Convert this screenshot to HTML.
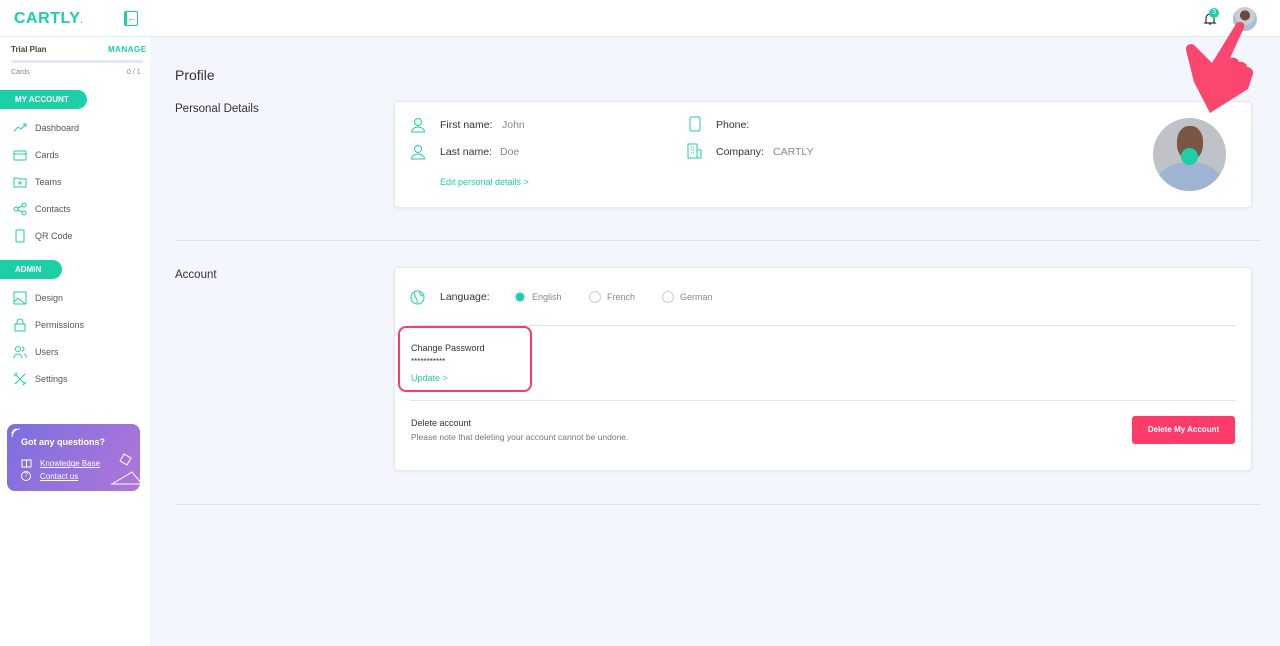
<!DOCTYPE html>
<html><head><meta charset="utf-8"><style>
*{box-sizing:border-box;margin:0;padding:0}
body{width:1280px;height:646px;overflow:hidden;font-family:"Liberation Sans",sans-serif;background:#f3f6fc;position:relative;color:#333}
.abs{position:absolute}
.hdr{left:0;top:0;width:1280px;height:37px;background:#fff;border-bottom:1px solid #e3e8f0}
.side{left:0;top:37px;width:150px;height:609px;background:#fff}
.t{color:#1dcfa6}
.nav{position:absolute;left:13px;font-size:9px;color:#555;display:flex;align-items:center}
.nav svg{width:14px;height:14px;margin-right:8px}
.pill{position:absolute;left:0;height:19px;background:#1dcfa6;border-radius:0 10px 10px 0;color:#fff;font-size:8px;font-weight:bold;padding-left:15px;line-height:19px}
.card{background:#fff;border:1px solid #e3e8f0;border-radius:4px;box-shadow:0 1px 3px rgba(0,0,0,.05)}
.lbl{font-size:10.5px;color:#333}
.val{font-size:10.5px;color:#888}
.hr{height:1px;background:#dfe4ec}
.radio{width:12px;height:12px;border:1px solid #ccd;border-radius:50%;display:inline-block}
</style></head><body>
<div class="abs hdr">
 <div class="abs t" style="left:14px;top:10px;font-size:16px;font-weight:bold;letter-spacing:0.5px">CARTLY<span style="font-size:8px">.</span></div>
 <div class="abs" style="left:124px;top:11px;width:14px;height:15px;border:1px solid #1dcfa6;border-left:3px solid #1dcfa6;border-radius:2px;font-size:9px;color:#888;text-align:center;line-height:12px">&larr;</div>
 <svg class="abs" style="left:1202px;top:11px" width="16" height="16" viewBox="0 0 16 16"><path d="M4 11V7a4 4 0 018 0v4l1 1H3z M7 13h2" stroke="#333" fill="none" stroke-width="1.2"/></svg>
 <div class="abs" style="left:1209px;top:8px;width:10px;height:10px;border-radius:50%;background:#1dcfa6;color:#fff;font-size:7px;text-align:center;line-height:10px">3</div>
 <div class="abs" style="left:1233px;top:7px;width:24px;height:24px;border-radius:50%;background:radial-gradient(circle at 50% 35%,#6b4a3a 0 25%,#c9ccd2 26% 50%,#a7bfd8 51%)"></div>
</div>
<div class="abs side">
 <div class="abs" style="left:11px;top:8px;font-size:8px;font-weight:bold;color:#444">Trial Plan</div>
 <div class="abs t" style="left:108px;top:8px;font-size:8px;font-weight:bold;letter-spacing:.5px">MANAGE</div>
 <div class="abs" style="left:11px;top:23px;width:132px;height:3px;background:#e3e8f0;border-radius:2px"></div>
 <div class="abs" style="left:11px;top:32px;font-size:7px;color:#888">Cards</div>
 <div class="abs" style="left:127px;top:32px;font-size:7px;color:#888">0 / 1</div>
 <div class="pill" style="top:53px;width:87px">MY ACCOUNT</div>
 <div class="nav" style="top:84px"><svg viewBox="0 0 14 14"><path d="M1 10l4-4 3 2 5-5M10 3h3v3" stroke="#1dcfa6" fill="none"/></svg>Dashboard</div>
 <div class="nav" style="top:111px"><svg viewBox="0 0 14 14"><rect x="1" y="3" width="12" height="9" rx="1" stroke="#1dcfa6" fill="none"/><path d="M1 6h12" stroke="#1dcfa6"/></svg>Cards</div>
 <div class="nav" style="top:138px"><svg viewBox="0 0 14 14"><path d="M1 3h4l1 1h7v8H1z M7 6v4M5 8h4" stroke="#1dcfa6" fill="none"/></svg>Teams</div>
 <div class="nav" style="top:165px"><svg viewBox="0 0 14 14"><circle cx="3" cy="7" r="2" stroke="#1dcfa6" fill="none"/><circle cx="11" cy="3" r="2" stroke="#1dcfa6" fill="none"/><circle cx="11" cy="11" r="2" stroke="#1dcfa6" fill="none"/><path d="M5 6l4-2M5 8l4 2" stroke="#1dcfa6"/></svg>Contacts</div>
 <div class="nav" style="top:192px"><svg viewBox="0 0 14 14"><rect x="3" y="1" width="8" height="12" rx="1" stroke="#1dcfa6" fill="none"/></svg>QR Code</div>
 <div class="pill" style="top:223px;width:62px">ADMIN</div>
 <div class="nav" style="top:254px"><svg viewBox="0 0 14 14"><rect x="1" y="1" width="12" height="12" stroke="#1dcfa6" fill="none"/><path d="M1 11l4-4 7 6" stroke="#1dcfa6" fill="none"/></svg>Design</div>
 <div class="nav" style="top:281px"><svg viewBox="0 0 14 14"><rect x="2" y="6" width="10" height="7" stroke="#1dcfa6" fill="none"/><path d="M4 6V4a3 3 0 016 0v2" stroke="#1dcfa6" fill="none"/></svg>Permissions</div>
 <div class="nav" style="top:308px"><svg viewBox="0 0 14 14"><circle cx="5" cy="4" r="2.5" stroke="#1dcfa6" fill="none"/><path d="M1 13a4 4 0 018 0M9 2a2 2 0 010 4M11 9a3 3 0 012 4" stroke="#1dcfa6" fill="none"/></svg>Users</div>
 <div class="nav" style="top:335px"><svg viewBox="0 0 14 14"><path d="M2 2l10 10M12 2L2 12M1 4l3-3M10 13l3-3" stroke="#1dcfa6" fill="none"/></svg>Settings</div>
 <div class="abs" style="left:7px;top:387px;width:133px;height:67px;border-radius:8px;background:linear-gradient(120deg,#7b6fe0,#b076d8);color:#fff;overflow:hidden">
  <svg class="abs" style="left:4px;top:4px" width="10" height="10"><path d="M1 9a8 8 0 018-8M1 6a5 5 0 015-5" stroke="#fff" fill="none"/></svg>
  <div class="abs" style="left:14px;top:13px;font-size:9px;font-weight:bold">Got any questions?</div>
  <svg class="abs" style="left:14px;top:35px" width="11" height="9"><path d="M1 1h4l0.5 1L6 1h4v7H6l-0.5 0.5L5 8H1z M5.5 2v6" stroke="#fff" fill="none"/></svg>
  <div class="abs" style="left:33px;top:35px;font-size:8px;text-decoration:underline">Knowledge Base</div>
  <div class="abs" style="left:14px;top:47px;width:10px;height:10px;border:1px solid #fff;border-radius:50%;font-size:7px;text-align:center;line-height:8px">?</div>
  <div class="abs" style="left:33px;top:48px;font-size:8px;text-decoration:underline">Contact us</div>
  <div class="abs" style="left:114px;top:31px;width:9px;height:9px;border:1px solid #fff;transform:rotate(30deg)"></div>
  <svg class="abs" style="left:103px;top:44px" width="32" height="24"><path d="M2 16L22 4l10 12z" stroke="#fff" fill="none"/></svg>
 </div>
</div>
<div class="abs" style="left:175px;top:67px;font-size:14px;color:#333">Profile</div>
<div class="abs" style="left:175px;top:103px;font-size:11.5px;color:#333">Personal Details</div>
<div class="abs card" style="left:394px;top:101px;width:858px;height:107px">
 <svg class="abs" style="left:15px;top:15px" width="16" height="16" viewBox="0 0 16 16"><circle cx="8" cy="5" r="3.5" stroke="#1dcfa6" fill="none"/><path d="M1.5 15a6.5 5 0 0113 0z" stroke="#1dcfa6" fill="none"/></svg>
 <div class="abs lbl" style="left:45px;top:17px">First name:</div><div class="abs val" style="left:107px;top:17px">John</div>
 <svg class="abs" style="left:15px;top:42px" width="16" height="16" viewBox="0 0 16 16"><circle cx="8" cy="5" r="3.5" stroke="#1dcfa6" fill="none"/><path d="M1.5 15a6.5 5 0 0113 0z" stroke="#1dcfa6" fill="none"/></svg>
 <div class="abs lbl" style="left:45px;top:44px">Last name:</div><div class="abs val" style="left:105px;top:44px">Doe</div>
 <div class="abs t" style="left:45px;top:75px;font-size:9px">Edit personal details &gt;</div>
 <svg class="abs" style="left:293px;top:14px" width="14" height="16"><rect x="2" y="1" width="10" height="14" rx="1.5" stroke="#1dcfa6" fill="none"/></svg>
 <div class="abs lbl" style="left:321px;top:17px">Phone:</div>
 <svg class="abs" style="left:292px;top:41px" width="16" height="16"><rect x="1" y="1" width="9" height="14" stroke="#1dcfa6" fill="none"/><rect x="10" y="7" width="4" height="8" stroke="#1dcfa6" fill="none"/><path d="M4 4h1M6 4h1M4 7h1M6 7h1M4 10h1M6 10h1" stroke="#1dcfa6"/></svg>
 <div class="abs lbl" style="left:321px;top:44px">Company:</div><div class="abs val" style="left:378px;top:44px">CARTLY</div>
 <div class="abs" style="left:758px;top:16px;width:73px;height:73px;border-radius:50%;overflow:hidden;background:#bfc2c6">
  <div class="abs" style="left:-5px;top:44px;width:83px;height:45px;border-radius:40px 40px 0 0;background:#9db4d2"></div>
  <div class="abs" style="left:24px;top:8px;width:26px;height:34px;border-radius:45%;background:#7a5644"></div>
 </div>
 <div class="abs" style="left:786px;top:46px;width:17px;height:17px;border-radius:50%;background:#1dcfa6"></div>
</div>
<div class="abs hr" style="left:175px;top:240px;width:1085px"></div>
<div class="abs" style="left:175px;top:269px;font-size:11.5px;color:#333">Account</div>
<div class="abs card" style="left:394px;top:267px;width:858px;height:204px">
 <svg class="abs" style="left:15px;top:22px" width="15" height="15"><circle cx="7.5" cy="7.5" r="6.5" stroke="#1dcfa6" fill="none"/><path d="M4 3c2 2 0 4 2 5s1 4 1 5M10 2c-1 2 1 4 3 4" stroke="#1dcfa6" fill="none"/></svg>
 <div class="abs lbl" style="left:45px;top:23px">Language:</div>
 <div class="abs radio" style="left:119px;top:23px;border-color:#dde;background:radial-gradient(circle,#1dcfa6 0 4px,#fff 4.5px)"></div><div class="abs val" style="left:137px;top:24px;font-size:9px">English</div>
 <div class="abs radio" style="left:194px;top:23px"></div><div class="abs val" style="left:212px;top:24px;font-size:9px">French</div>
 <div class="abs radio" style="left:267px;top:23px"></div><div class="abs val" style="left:285px;top:24px;font-size:9px">German</div>
 <div class="abs hr" style="left:15px;top:57px;width:826px"></div>
 <div class="abs" style="left:3px;top:58px;width:134px;height:66px;border:2.5px solid #fb3b6e;border-radius:8px"></div>
 <div class="abs" style="left:16px;top:75px;font-size:9px;color:#333">Change Password</div>
 <div class="abs" style="left:16px;top:89px;font-size:8px;color:#333">***********</div>
 <div class="abs t" style="left:16px;top:105px;font-size:9px">Update &gt;</div>
 <div class="abs hr" style="left:15px;top:132px;width:826px"></div>
 <div class="abs" style="left:16px;top:150px;font-size:9px;color:#333">Delete account</div>
 <div class="abs" style="left:16px;top:164px;font-size:8.5px;color:#777">Please note that deleting your account cannot be undone.</div>
 <div class="abs" style="left:737px;top:148px;width:103px;height:28px;background:#fd3c6c;border-radius:3px;color:#fff;font-size:8px;font-weight:bold;text-align:center;line-height:28px">Delete My Account</div>
</div>
<div class="abs hr" style="left:175px;top:504px;width:1085px"></div>
<svg class="abs" style="left:1180px;top:18px" width="80" height="100" viewBox="0 0 80 100"><path d="M56 6c3-4 10-2 8 4L50 40c3-1 8 0 9 4 3-1 8 1 8 5 3 0 7 3 6 7l-5 15-38 24L14 64 6 32c-1-6 7-8 10-3l16 16z" fill="#fb4670"/></svg>
</body></html>
